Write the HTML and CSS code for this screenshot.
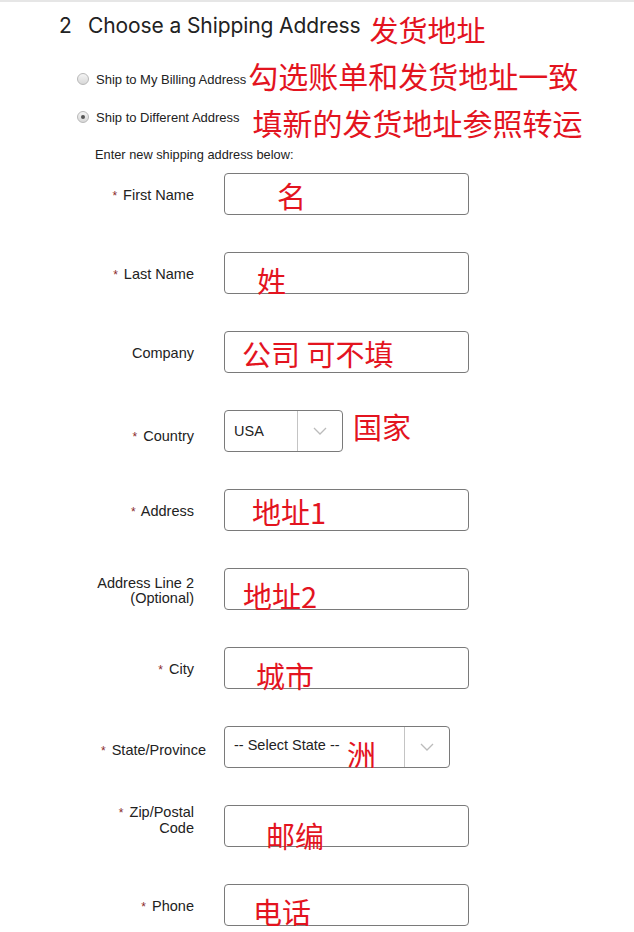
FILE: index.html
```html
<!DOCTYPE html>
<html lang="en">
<head>
    <meta charset="UTF-8">
    <meta name="viewport" content="width=device-width, initial-scale=1.0">
    <title>Choose a Shipping Address</title>
    <link rel="stylesheet" href="styles.css">
</head>
<body>
    <div class="topline"></div>
    <div class="section">
        <!-- Step heading -->
        <div class="heading">
            <span class="step">2</span>
            <span class="title">Choose a Shipping Address</span>
            <span class="note-inline note-title">发货地址</span>
        </div>

        <div class="option option-billing">
            <span class="radio"></span>
            <span class="option-text">Ship to My Billing Address</span>
            <span class="note-inline note-billing">勾选账单和发货地址一致</span>
        </div>
        <div class="option option-different">
            <span class="radio checked"></span>
            <span class="option-text">Ship to Different Address</span>
            <span class="note-inline note-different">填新的发货地址参照转运</span>
        </div>

        <p class="hint">Enter new shipping address below:</p>

        <form class="address-form">
            <div class="row">
                <label class="label"><span class="req">*</span> First Name</label>
                <div class="field"><span class="note n-first">名</span></div>
            </div>
            <div class="row">
                <label class="label"><span class="req">*</span> Last Name</label>
                <div class="field"><span class="note n-last">姓</span></div>
            </div>
            <div class="row">
                <label class="label">Company</label>
                <div class="field"><span class="note n-company">公司 可不填</span></div>
            </div>
            <div class="row">
                <label class="label label-low"><span class="req">*</span> Country</label>
                <div class="field-line">
                    <div class="select select-country">
                        <span class="select-value">USA</span>
                        <span class="select-arrow">
                            <svg width="14" height="8" viewBox="0 0 14 8"><path d="M1 1l6 6 6-6" fill="none" stroke="#bbbbbb" stroke-width="1.3"/></svg>
                        </span>
                    </div>
                    <span class="note-inline note-country">国家</span>
                </div>
            </div>
            <div class="row">
                <label class="label"><span class="req">*</span> Address</label>
                <div class="field"><span class="note n-address">地址1</span></div>
            </div>
            <div class="row">
                <label class="label">Address Line 2<br>(Optional)</label>
                <div class="field"><span class="note n-address2">地址2</span></div>
            </div>
            <div class="row">
                <label class="label"><span class="req">*</span> City</label>
                <div class="field"><span class="note n-city">城市</span></div>
            </div>
            <div class="row">
                <label class="label label-wide"><span class="req">*</span> State/Province</label>
                <div class="select select-state">
                    <span class="select-value">-- Select State --</span>
                    <span class="select-arrow">
                        <svg width="14" height="8" viewBox="0 0 14 8"><path d="M1 1l6 6 6-6" fill="none" stroke="#bbbbbb" stroke-width="1.3"/></svg>
                    </span>
                    <span class="note n-state">洲</span>
                </div>
            </div>
            <div class="row">
                <label class="label label-high"><span class="req">*</span> Zip/Postal<br>Code</label>
                <div class="field"><span class="note n-zip">邮编</span></div>
            </div>
            <div class="row">
                <label class="label"><span class="req">*</span> Phone</label>
                <div class="field"><span class="note n-phone">电话</span></div>
            </div>
        </form>
    </div>
</body>
</html>
```

FILE: styles.css
```css
/* Page */
body {
    margin: 0;
    background-color: #ffffff;
    color: #222222;
    font-family: "Liberation Sans", Arial, sans-serif;
}

.topline {
    height: 2px;
    background-color: #e6e6e6;
}

.section {
    padding-left: 59px;
}

/* Red annotations */
.note-inline,
.note {
    color: #e3141f;
    font-family: "Noto Sans CJK SC", sans-serif;
    font-size: 29px;
    line-height: 1;
    white-space: nowrap;
}

/* Heading */
.heading {
    display: flex;
    align-items: center;
    height: 46px;
}

.step {
    font-family: Inter, sans-serif;
    font-size: 21px;
    width: 29px;
}

.title {
    font-family: Inter, sans-serif;
    font-size: 21px;
    letter-spacing: -0.1px;
}

.note-title {
    margin-left: 9px;
    margin-top: 8px;
}

/* Radio options */
.option {
    display: flex;
    align-items: center;
    padding-left: 18px;
    height: 38px;
    font-size: 13px;
}

.option-billing {
    margin-top: 12px;
}

.radio {
    width: 10px;
    height: 10px;
    border: 1px solid #b8b8b8;
    border-radius: 50%;
    background: linear-gradient(#f4f4f4, #d8d8d8);
    margin-right: 7px;
    position: relative;
}

.radio.checked::after {
    content: "";
    position: absolute;
    left: 3px;
    top: 3px;
    width: 4px;
    height: 4px;
    border-radius: 50%;
    background-color: #555555;
}

.note-billing {
    margin-left: 2px;
    font-size: 30px;
    position: relative;
    top: -4px;
}

.note-different {
    margin-left: 13px;
    font-size: 30px;
    position: relative;
    top: 5px;
}

.hint {
    margin: 0;
    padding-left: 36px;
    font-size: 12.8px;
    height: 37px;
    line-height: 18px;
    padding-top: 10px;
    box-sizing: border-box;
}

/* Form rows */
.address-form {
    display: flex;
    flex-direction: column;
    gap: 37px;
}

.row {
    display: grid;
    grid-template-columns: 135px auto;
    column-gap: 30px;
    align-items: center;
    height: 42px;
}

.label {
    text-align: right;
    font-size: 14.5px;
    line-height: 15px;
    padding-top: 3px;
    color: #222222;
}

.label-low {
    margin-top: 8px;
}

.label-high {
    margin-top: -14px;
}

.label-wide {
    margin-right: -12px;
    margin-top: 4px;
}

.req {
    color: #8a2a2a;
    font-size: 12px;
    margin-right: 2px;
}

.field {
    position: relative;
    width: 245px;
    height: 42px;
    box-sizing: border-box;
    border: 1px solid #7a7a7a;
    border-radius: 4px;
}

.note {
    position: absolute;
}

.n-first { left: 52px; top: 7px; }
.n-last { left: 32px; top: 13px; }
.n-company { left: 17px; top: 7px; }
.n-address { left: 27px; top: 7px; }
.n-address2 { left: 18px; top: 12px; }
.n-city { left: 31px; top: 13px; }
.n-state { left: 122px; top: 12px; }
.n-zip { left: 41px; top: 15px; }
.n-phone { left: 28px; top: 12px; }

/* Select boxes */
.field-line {
    display: flex;
    align-items: center;
    gap: 10px;
}

.select {
    position: relative;
    display: flex;
    height: 42px;
    box-sizing: border-box;
    border: 1px solid #7a7a7a;
    border-radius: 4px;
    font-size: 14.5px;
}

.select-country {
    width: 119px;
}

.select-state {
    width: 226px;
}

.select-value {
    flex: 1;
    display: flex;
    align-items: center;
    padding-left: 9px;
}

.select-state .select-value {
    margin-top: -4px;
}

.select-arrow {
    width: 44px;
    border-left: 1px solid #c4c4c4;
    display: flex;
    align-items: center;
    justify-content: center;
}

.note-country {
    margin-top: -10px;
}
```
